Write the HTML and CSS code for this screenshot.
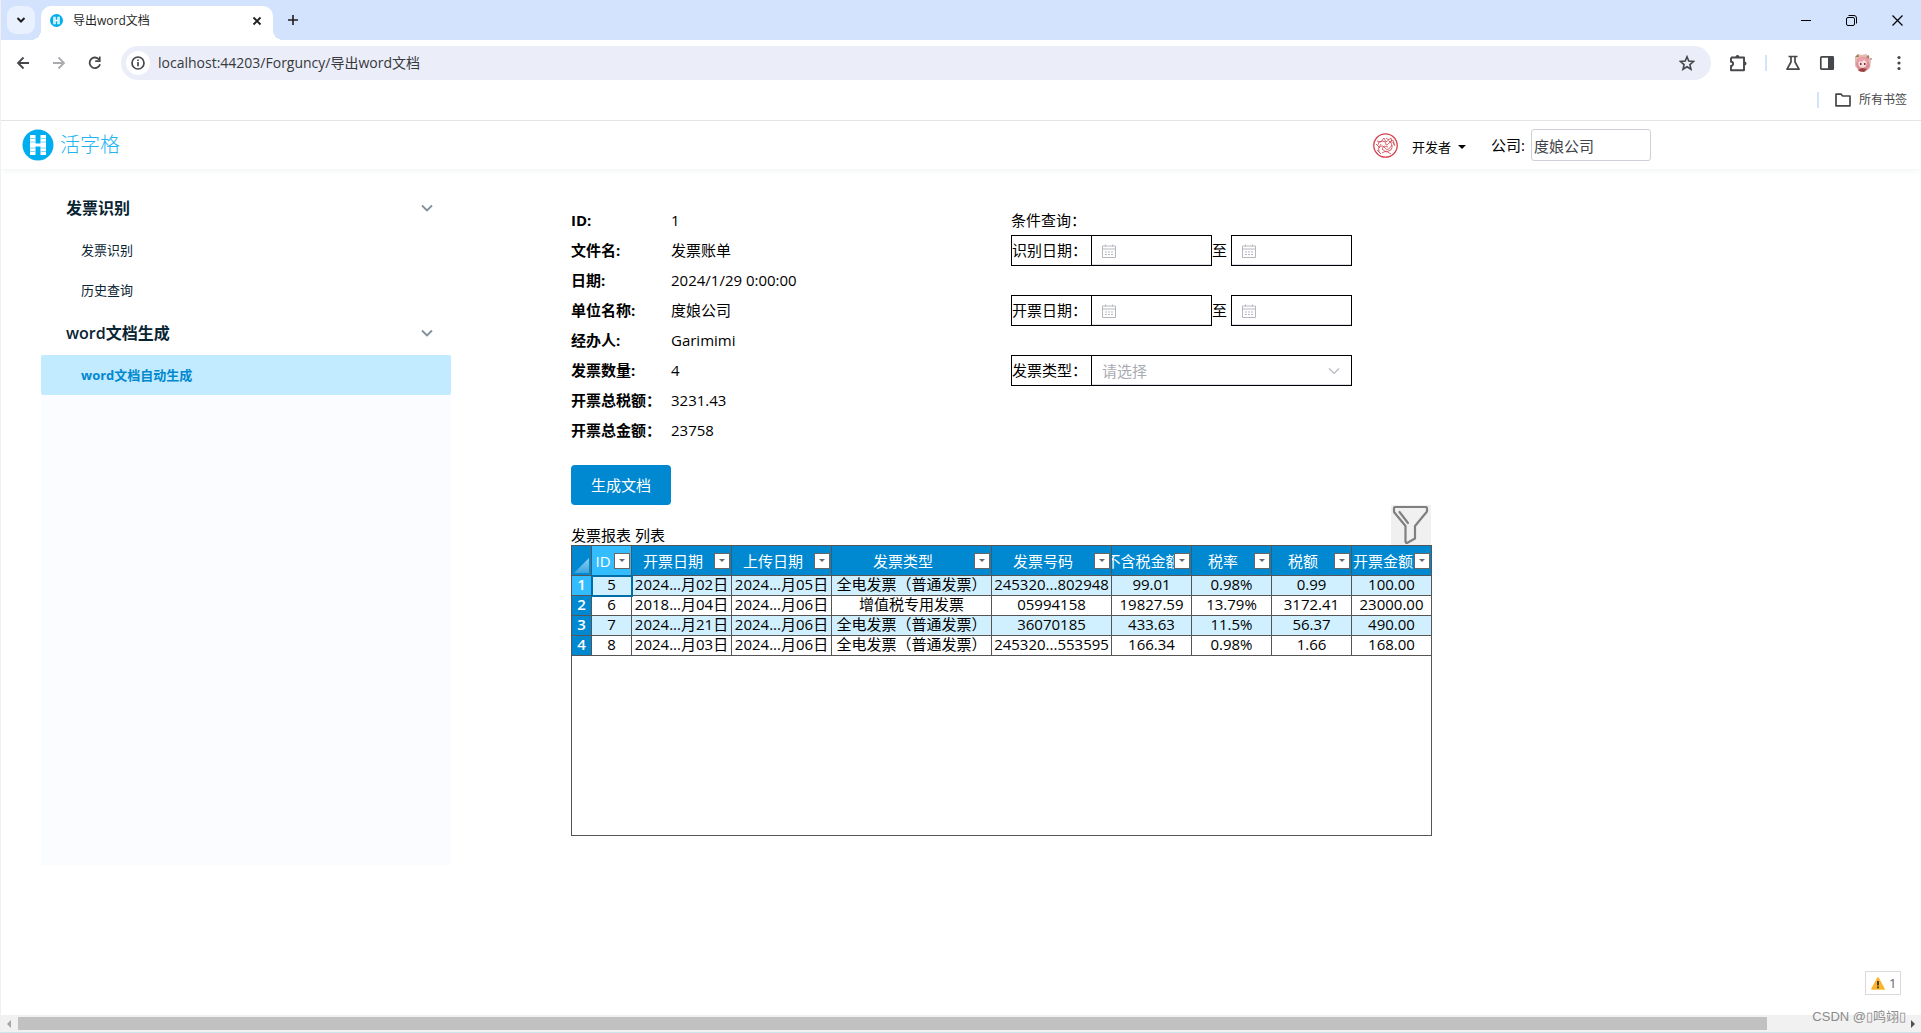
FILE: index.html
```html
<!DOCTYPE html>
<html lang="zh-CN">
<head>
<meta charset="utf-8">
<title>导出word文档</title>
<link rel="stylesheet" href="styles.css">
</head>
<body>
<div class="window">
  <div class="tabstrip">
    <button class="tab-search" aria-label="搜索标签页"><svg width="12" height="12" viewBox="0 0 12 12"><path d="M2.5 4l3.5 3.5L9.500 4" fill="none" stroke="currentColor" stroke-width="2"/></svg></button>
    <div class="tab">
      <svg width="13" height="13" viewBox="0 0 32 32"><circle cx="16" cy="16" r="16" fill="#00aeef"/><path d="M8 7h6v7h4V7h6v18h-6v-7h-4v7H8z" fill="#fff"/><path d="M11 7v18M21 7v18" stroke="#7fd6f7"/></svg>
      <span class="tab-title">导出word文档</span>
      <button class="plain tab-close" aria-label="关闭标签页"><svg width="10" height="10" viewBox="0 0 10 10"><path d="M1.500 1.500l7 7m0-7l-7 7" stroke="currentColor" stroke-width="1.800"/></svg></button>
    </div>
    <button class="plain tab-new" aria-label="新标签页"><svg width="12" height="12" viewBox="0 0 12 12"><path d="M6 1v10M1 6h10" stroke="currentColor" stroke-width="1.600"/></svg></button>
    <div class="window-buttons">
      <button class="plain" aria-label="最小化"><svg width="10" height="10" viewBox="0 0 10 10"><path d="M0 5.500h10" stroke="currentColor"/></svg></button>
      <button class="plain" aria-label="还原"><svg width="11" height="11" viewBox="0 0 11 11"><g fill="none" stroke="currentColor"><rect x=".5" y="2.500" width="8" height="8" rx="1.500"/><path d="M2.500 .5h5.500a2.500 2.500 0 0 1 2.500 2.500v5.500"/></g></svg></button>
      <button class="plain" aria-label="关闭"><svg width="11" height="11" viewBox="0 0 11 11"><path d="M.5 .5l10 10m0-10l-10 10" stroke="currentColor" stroke-width="1.200"/></svg></button>
    </div>
  </div>

  <div class="toolbar">
    <div class="nav-buttons">
      <button class="plain" aria-label="后退"><svg width="14" height="14" viewBox="0 0 14 14"><path d="M13 7H2m5.500-5.500L2 7l5.500 5.500" fill="none" stroke="currentColor" stroke-width="1.800"/></svg></button>
      <button class="plain dim" aria-label="前进"><svg width="14" height="14" viewBox="0 0 14 14"><path d="M1 7h11M6.500 1.500L12 7l-5.500 5.500" fill="none" stroke="currentColor" stroke-width="1.800"/></svg></button>
      <button class="plain" aria-label="刷新"><svg width="14" height="14" viewBox="0 0 14 14"><path d="M12 8.200A5.300 5.300 0 1 1 11.200 3.700" fill="none" stroke="currentColor" stroke-width="1.800"/><path d="M12.600 .5v5.400H7.200V4.300H11V.5z" fill="currentColor"/></svg></button>
    </div>
    <div class="address">
      <button class="site-info" aria-label="网站信息"><svg width="14" height="14" viewBox="0 0 14 14"><circle cx="7" cy="7" r="6" fill="none" stroke="currentColor" stroke-width="1.700"/><path d="M7 6v4.300M7 3.500v1.600" stroke="currentColor" stroke-width="1.700"/></svg></button>
      <input class="url" type="text" aria-label="地址" value="localhost:44203/Forguncy/导出word文档">
      <button class="plain" aria-label="收藏"><svg width="16" height="16" viewBox="0 0 16 16"><path d="M8 1.800l1.800 4.300 4.700.4-3.600 3.100 1.100 4.600L8 11.700l-4 2.500 1.100-4.600L1.500 6.500l4.700-.4z" fill="none" stroke="currentColor" stroke-width="1.600"/></svg></button>
    </div>
    <div class="extensions">
      <button class="plain" aria-label="扩展程序"><svg width="18" height="18" viewBox="0 0 18 18"><path d="M2 3.500h13v4.300M15 11.400v4.800H2v-4.300a2 2 0 0 0 0-4.200V3.500M15 7.800v3.600" fill="none" stroke="currentColor" stroke-width="1.900" stroke-linejoin="round"/><path d="M6.500 3a2 2 0 0 1 4 0zM15.500 7.500a2 2 0 0 1 0 4z" fill="currentColor"/></svg></button>
      <span class="divider"></span>
      <button class="plain" aria-label="实验"><svg width="16" height="16" viewBox="0 0 16 16"><path d="M3.500 1.500h9M6 1.500v5.500L2 14.200h12L10 7V1.500" fill="none" stroke="currentColor" stroke-width="1.700" stroke-linejoin="round"/></svg></button>
      <button class="plain" aria-label="侧边栏"><svg width="16" height="16" viewBox="0 0 16 16"><rect x="1.800" y="1.800" width="12.400" height="12.400" rx="1" fill="none" stroke="currentColor" stroke-width="1.700"/><path d="M9 1h5.500v14H9z" fill="currentColor"/></svg></button>
      <button class="plain" aria-label="个人资料"><svg width="20" height="20" viewBox="0 0 20 20"><path d="M2 4l3-3 4 1 4-1 3 2 2 5-1 7-5 4-6-1-4-5z" fill="#e3bdb2"/><path d="M4 7q5-6 11-1l2 7-3 4-8 1-3-6z" fill="#dc8d99"/><circle cx="9.500" cy="10.500" r="4.200" fill="#f8dcd8"/><path d="M4 10q1-6 6-6 5 1 5 6l-4-3-3 2-2-1z" fill="#ef9fab"/><path d="M7 10h1.500v2H7zM11 10h1.500v2H11z" fill="#7b3440"/><path d="M5 17l4-2 5 1-3 3-4-.5z" fill="#9c4040"/><path d="M2 4l3-3 1 3zM13 4l3-2 0 4z" fill="#a37c5c"/><circle cx="18" cy="6" r=".8" fill="#8b4850"/></svg></button>
      <button class="plain" aria-label="菜单"><svg width="16" height="16" viewBox="0 0 16 16"><g fill="currentColor"><circle cx="8" cy="2.500" r="1.600"/><circle cx="8" cy="8" r="1.600"/><circle cx="8" cy="13.500" r="1.600"/></g></svg></button>
    </div>
  </div>

  <div class="bookmarks">
    <span class="divider"></span>
    <button class="plain all-bookmarks"><svg width="16" height="14" viewBox="0 0 16 14"><path d="M1 1.200h5l1.700 1.800H15v9.800H1z" fill="none" stroke="currentColor" stroke-width="1.700" stroke-linejoin="round"/></svg>所有书签</button>
  </div>

  <div class="page">
    <header class="header">
      <a class="brand" href="#">
        <svg width="32" height="32" viewBox="0 0 32 32"><circle cx="16" cy="16" r="15.500" fill="#00aeef"/><path d="M8 6h5.500v8.500h5V6H24v20h-5.500v-8.500h-5V26H8z" fill="#fff"/><path d="M8 9.500h5.500M8 13h5.500M8 19h5.500M8 22.500h5.500M18.500 9.500H24M18.500 13H24M18.500 19H24M18.500 22.500H24" stroke="#7fd6f7"/></svg>
        <span>活字格</span>
      </a>
      <div class="account">
        <svg width="25" height="25" viewBox="0 0 25 25"><g fill="none" stroke="#d2404a"><circle cx="12.500" cy="12.500" r="11.700" stroke-width="1.300"/><path d="M4 8l4 1 3-4 2 4 5-4 1 5M5 12q0-4 4-4t4 3 4-2 4 3M6 15q3-4 6 0t7-3M8 11q-4 4-2 8M16 8q5 4 2 9l-5 2-4-3 2-3 4 1M4 17l4 4M9 20l4-2 5 3M13 5l3 2M20 9l2 4M3 11l3 3" stroke-width=".8"/></g></svg>
        <button class="plain user-menu">开发者<span class="caret"></span></button>
        <label for="company">公司:</label>
        <input id="company" class="company" type="text" value="度娘公司">
      </div>
    </header>

    <div class="columns">
      <nav class="sidebar">
        <button class="group">发票识别<svg width="12" height="8" viewBox="0 0 12 8"><path d="M1 1.500l5 5 5-5" fill="none" stroke="#81909a" stroke-width="1.800"/></svg></button>
        <a class="item" href="#">发票识别</a>
        <a class="item" href="#">历史查询</a>
        <button class="group">word文档生成<svg width="12" height="8" viewBox="0 0 12 8"><path d="M1 1.500l5 5 5-5" fill="none" stroke="#81909a" stroke-width="1.800"/></svg></button>
        <a class="item active" href="#">word文档自动生成</a>
      </nav>

      <main class="main">
        <div class="summary">
          <dl class="details">
            <dt>ID:</dt><dd>1</dd>
            <dt>文件名:</dt><dd>发票账单</dd>
            <dt>日期:</dt><dd>2024/1/29 0:00:00</dd>
            <dt>单位名称:</dt><dd>度娘公司</dd>
            <dt>经办人:</dt><dd>Garimimi</dd>
            <dt>发票数量:</dt><dd>4</dd>
            <dt>开票总税额：</dt><dd>3231.43</dd>
            <dt>开票总金额：</dt><dd>23758</dd>
          </dl>
          <form class="query">
            <p class="query-title">条件查询：</p>
            <div class="query-row">
              <label for="scan-from">识别日期：</label>
              <span class="field"><svg width="14" height="14" viewBox="0 0 14 14"><path d="M.5 2h13v11.500H.5zM.5 5h13M3.500 .5v2M10.500 .5v2" fill="none" stroke="#b4b8be"/><path d="M3 8h2M6 8h2M9 8h2M3 10.500h2M6 10.500h2M9 10.500h2" stroke="#b4b8be"/></svg><input id="scan-from" type="text"></span>
              <span class="to">至</span>
              <span class="field"><svg width="14" height="14" viewBox="0 0 14 14"><path d="M.5 2h13v11.500H.5zM.5 5h13M3.500 .5v2M10.500 .5v2" fill="none" stroke="#b4b8be"/><path d="M3 8h2M6 8h2M9 8h2M3 10.500h2M6 10.500h2M9 10.500h2" stroke="#b4b8be"/></svg><input type="text" aria-label="识别日期至"></span>
            </div>
            <div class="query-row">
              <label for="bill-from">开票日期：</label>
              <span class="field"><svg width="14" height="14" viewBox="0 0 14 14"><path d="M.5 2h13v11.500H.5zM.5 5h13M3.500 .5v2M10.500 .5v2" fill="none" stroke="#b4b8be"/><path d="M3 8h2M6 8h2M9 8h2M3 10.500h2M6 10.500h2M9 10.500h2" stroke="#b4b8be"/></svg><input id="bill-from" type="text"></span>
              <span class="to">至</span>
              <span class="field"><svg width="14" height="14" viewBox="0 0 14 14"><path d="M.5 2h13v11.500H.5zM.5 5h13M3.500 .5v2M10.500 .5v2" fill="none" stroke="#b4b8be"/><path d="M3 8h2M6 8h2M9 8h2M3 10.500h2M6 10.500h2M9 10.500h2" stroke="#b4b8be"/></svg><input type="text" aria-label="开票日期至"></span>
            </div>
            <div class="query-row">
              <label for="kind">发票类型：</label>
              <span class="field wide"><select id="kind"><option>请选择</option></select><svg width="12" height="8" viewBox="0 0 12 8"><path d="M1 1.500l5 5 5-5" fill="none" stroke="#b4b8be" stroke-width="1.200"/></svg></span>
            </div>
          </form>
        </div>

        <button class="primary">生成文档</button>

        <div class="list-head">
          <h2>发票报表 列表</h2>
          <button class="filter" aria-label="筛选"><svg width="40" height="40" viewBox="0 0 40 40"><g fill="none" stroke="#808080" stroke-width="2.200" stroke-linejoin="round" stroke-linecap="round"><path d="M4 2h31q1 0 1 2v2.500L24 21v12.500L16 38q-1.500 0-1.500-2V21L3 7V3q0-1 1-1z"/><path d="M8.500 7l8.500 11"/></g></svg></button>
        </div>

        <div class="sheet">
          <table>
            <colgroup><col class="c20"><col class="c40"><col class="c100"><col class="c100"><col class="c160"><col class="c120"><col class="c80"><col class="c80"><col class="c80"><col class="c80"></colgroup>
            <thead>
              <tr>
                <td class="corner"><svg width="15" height="15" viewBox="0 0 15 15"><defs><linearGradient id="cg" x1="0" y1="0" x2="0" y2="1"><stop offset="0" stop-color="#8fd0f3"/><stop offset="1" stop-color="#3aa5df"/></linearGradient></defs><path d="M15 0v15H0z" fill="url(#cg)"/></svg></td>
                <th class="current"><div class="th"><span>ID</span><button aria-label="筛选ID"></button></div></th>
                <th><div class="th"><span>开票日期</span><button aria-label="筛选开票日期"></button></div></th>
                <th><div class="th"><span>上传日期</span><button aria-label="筛选上传日期"></button></div></th>
                <th><div class="th"><span>发票类型</span><button aria-label="筛选发票类型"></button></div></th>
                <th><div class="th"><span>发票号码</span><button aria-label="筛选发票号码"></button></div></th>
                <th><div class="th"><span>不含税金额</span><button aria-label="筛选不含税金额"></button></div></th>
                <th><div class="th"><span>税率</span><button aria-label="筛选税率"></button></div></th>
                <th><div class="th"><span>税额</span><button aria-label="筛选税额"></button></div></th>
                <th><div class="th"><span>开票金额</span><button aria-label="筛选开票金额"></button></div></th>
              </tr>
            </thead>
            <tbody>
              <tr><th class="current">1</th><td class="selected">5</td><td>2024...月02日</td><td>2024...月05日</td><td>全电发票（普通发票）</td><td>245320...802948</td><td>99.01</td><td>0.98%</td><td>0.99</td><td>100.00</td></tr>
              <tr><th>2</th><td>6</td><td>2018...月04日</td><td>2024...月06日</td><td>增值税专用发票</td><td>05994158</td><td>19827.59</td><td>13.79%</td><td>3172.41</td><td>23000.00</td></tr>
              <tr><th>3</th><td>7</td><td>2024...月21日</td><td>2024...月06日</td><td>全电发票（普通发票）</td><td>36070185</td><td>433.63</td><td>11.5%</td><td>56.37</td><td>490.00</td></tr>
              <tr><th>4</th><td>8</td><td>2024...月03日</td><td>2024...月06日</td><td>全电发票（普通发票）</td><td>245320...553595</td><td>166.34</td><td>0.98%</td><td>1.66</td><td>168.00</td></tr>
            </tbody>
          </table>
        </div>
      </main>
    </div>

    <button class="warning"><svg width="14" height="13" viewBox="0 0 14 13"><path d="M7 1l6 11H1z" fill="#fbb528" stroke="#fbb528" stroke-width="1.600" stroke-linejoin="round"/><path d="M7 4v4.500M7 9.500v1.700" stroke="#333" stroke-width="1.800"/></svg>1</button>
  </div>

  <div class="scrollbar">
    <span class="arrow left"></span>
    <div class="track"><div class="thumb"></div></div>
    <span class="arrow right"></span>
    <span class="watermark">CSDN @▯鸣翊▯</span>
  </div>
</div>
</body>
</html>
```
FILE: styles.css
```css
* { box-sizing: border-box; }
body {
  margin: 0;
  font: 15px/20px "Open Sans", "Noto Sans CJK SC", sans-serif;
  color: #000;
  background: #fff;
}
button, input, select { font: inherit; color: inherit; margin: 0; padding: 0; border: 0; background: none; outline: 0; }
button { cursor: pointer; }
svg { display: block; flex: none; }
a { color: inherit; text-decoration: none; }
.plain { display: flex; align-items: center; justify-content: center; }

.window {
  min-height: 100vh;
  display: flex;
  flex-direction: column;
  border-left: 1px solid #f0f0f0;
  border-bottom: 1px solid #cfe4ea;
}

/* Browser tab strip */
.tabstrip { display: flex; align-items: center; height: 40px; padding-left: 6px; background: #d3e2fd; font-size: 12px; color: #1f1f1f; }
.tab-search { display: flex; align-items: center; justify-content: center; width: 28px; height: 28px; border-radius: 9px; background: #e9f0fe; }
.tab {
  position: relative;
  display: flex;
  align-items: center;
  align-self: flex-end;
  gap: 10px;
  width: 232px;
  height: 34px;
  margin-left: 6px;
  padding: 0 11px 5px 9px;
  border-radius: 10px 10px 0 0;
  background: #fff;
}
.tab::before, .tab::after { content: ""; position: absolute; bottom: 0; width: 10px; height: 10px; }
.tab::before { right: 100%; background: radial-gradient(circle at 0 0, transparent 10px, #fff 10px); }
.tab::after { left: 100%; background: radial-gradient(circle at 100% 0, transparent 10px, #fff 10px); }
.tab-title { flex: 1; }
.tab-new { margin-left: 14px; }
.window-buttons { display: flex; gap: 35px; margin-left: auto; padding-right: 18px; color: #000; }

/* Browser toolbar */
.toolbar { display: flex; align-items: center; padding: 6px 14px 0 15px; color: #45474a; }
.nav-buttons { display: flex; gap: 22px; margin-right: 19px; }
.dim { color: #a9abae; }
.address { flex: 1; display: flex; align-items: center; gap: 8px; height: 34px; padding: 0 16px 0 5px; border-radius: 17px; background: #ebeef8; }
.site-info { display: flex; align-items: center; justify-content: center; width: 24px; height: 24px; border-radius: 12px; background: #fff; }
.url { flex: 1; font-size: 14px; color: #36393d; }
.extensions { display: flex; align-items: center; gap: 18px; margin-left: 18px; }
.divider { width: 2px; height: 16px; background: #d3e2fd; }
.bookmarks { display: flex; align-items: center; justify-content: flex-end; gap: 16px; height: 41px; padding-right: 14px; border-bottom: 1px solid #dfe1e2; color: #45474a; font-size: 12px; }
.all-bookmarks { gap: 8px; }

/* Application header */
.page { flex: 1; display: flex; flex-direction: column; }
.header { display: flex; align-items: center; justify-content: space-between; height: 48px; padding: 0 270px 0 21px; box-shadow: 0 2px 6px #f2f5f4; }
.brand { display: flex; align-items: center; gap: 6px; color: #22b3f0; font-size: 20px; font-weight: 300; }
.account { display: flex; align-items: center; }
.user-menu { gap: 7px; margin: 4px 25px 0 14px; font-size: 13px; }
.caret { border: 4px solid transparent; border-top-color: #000; border-bottom: 0; }
.account label { margin-right: 6px; }
.company { width: 120px; height: 32px; padding: 0 2px; border: 1px solid #cdd0d6; border-radius: 3px; color: #404348; }

/* Side navigation */
.columns { flex: 1; display: flex; align-items: flex-start; padding: 16px 40px 0; }
.sidebar { flex: 0 1 410px; min-height: 680px; background: #fbfcff; color: #092433; }
.group { display: flex; align-items: center; justify-content: space-between; width: 100%; height: 45px; padding: 0 18px 0 25px; background: #fff; font-size: 16px; font-weight: 600; }
.item { display: flex; align-items: center; height: 40px; padding-left: 40px; background: #fff; font-size: 13px; }
.item.active { border-radius: 2px; background: #c2ebff; color: #0088d1; font-weight: 700; }

/* Invoice summary */
.main { flex: 0 1 861px; margin: 20px 0 0 120px; }
.summary { display: grid; grid-template-columns: 440px 1fr; }
.details { display: grid; grid-template-columns: 100px 1fr; grid-auto-rows: 30px; align-items: center; margin: 0; }
.details dt { font-weight: 700; }
.details dd { margin: 0; }
.query { display: flex; flex-direction: column; gap: 29px; }
.query-title { margin: 5px 0 -24px; }
.query-row { display: flex; height: 31px; }
.query-row label { width: 80px; padding-top: 4px; border: 1px solid #000; border-right: 0; }
.field { display: flex; align-items: center; gap: 6px; width: 121px; padding: 0 11px 0 10px; border: 1px solid #000; box-shadow: inset 0 -1px #dcdfe6; }
.field input { flex: 1; min-width: 0; }
.field.wide { width: 261px; }
.field select { flex: 1; appearance: none; color: #a8abb2; }
.to { width: 19px; padding-top: 5px; }

.primary { display: block; width: 100px; height: 40px; margin-top: 20px; border-radius: 4px; background: #0088d1; color: #fff; }
.list-head { display: flex; align-items: flex-end; justify-content: space-between; padding-right: 1px; }
.list-head h2 { margin: 0; font-size: 15px; font-weight: 400; }
.filter { width: 40px; height: 40px; background: #f0f0f0; }

/* Invoice sheet */
.sheet { min-height: 291px; border: 1px solid #555; }
table { width: 861px; margin: -1px; border-collapse: collapse; table-layout: fixed; }
.c20 { width: 20px; }
.c40 { width: 40px; }
.c80 { width: 80px; }
.c100 { width: 100px; }
.c120 { width: 120px; }
.c160 { width: 160px; }
th, td { height: 20px; padding: 0; border: 1px solid #555; line-height: 17px; text-align: center; vertical-align: top; white-space: nowrap; overflow: hidden; }
thead tr { height: 30px; }
th, .corner { background: #0088d1; color: #fff; font-weight: 400; }
th.current { background: #33bdff; }
tbody th { font-weight: 600; }
tbody tr:nth-child(odd) td { background: #d1f0ff; }
.corner { vertical-align: bottom; }
.corner svg { margin: 0 2px 2px auto; }
.th { display: flex; align-items: center; height: 29px; padding-right: 1px; }
.th span { flex: 1; min-width: 0; display: flex; justify-content: center; overflow: hidden; line-height: 20px; }
.th button { display: flex; align-items: center; justify-content: center; flex: none; width: 16px; height: 16px; border: 1px solid #666; background: #fff; }
.th button::before { content: ""; border: 3px solid transparent; border-top-color: #666; border-bottom: 0; }
td.selected { outline: 2px solid #006fa8; outline-offset: -1px; }

.warning { display: flex; align-items: center; gap: 4px; align-self: flex-end; width: 36px; height: 24px; margin: 0 20px 20px 0; padding-left: 5px; border: 1px solid #dadada; color: #5c6670; font-size: 13px; }

/* Horizontal scroll bar */
.scrollbar { position: relative; display: flex; align-items: center; height: 17px; background: #f1f1f1; }
.arrow { border: 4px solid transparent; }
.arrow.left { width: 4px; margin: 0 7px 0 6px; border-left: 0; border-right-color: #a3a3a3; }
.arrow.right { width: 4px; margin: 0 6px 0 12px; border-right: 0; border-left-color: #505050; }
.track { flex: 1; }
.thumb { width: 93%; height: 13px; background: #c1c1c1; }
.watermark { position: absolute; right: 15px; bottom: 5px; color: #8b8b8b; font: 13px/20px "Liberation Sans", "Noto Sans CJK SC", sans-serif; }
```
